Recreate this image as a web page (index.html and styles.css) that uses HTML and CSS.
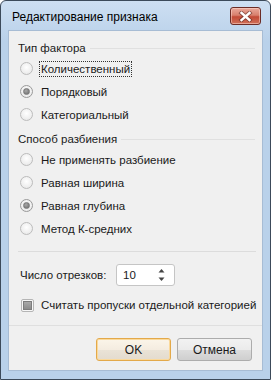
FILE: index.html
```html
<!DOCTYPE html>
<html lang="ru">
<head>
    <meta charset="UTF-8">
    <title>Редактирование признака</title>
    <link rel="stylesheet" href="styles.css">
</head>
<body>
    <div class="window">
        <div class="titlebar">
            <span class="title">Редактирование признака</span>
            <button class="close" type="button">
                <svg width="15" height="11" viewBox="0 0 15 11">
                    <path d="M3.5 2 L11.5 9 M11.5 2 L3.5 9" stroke="#5a2a24" stroke-width="4.2" stroke-linecap="square" opacity="0.6"/>
                    <path d="M3.5 2 L11.5 9 M11.5 2 L3.5 9" stroke="#ffffff" stroke-width="2.4" stroke-linecap="square"/>
                </svg>
            </button>
        </div>

        <div class="client">
            <div class="group-head"><span>Тип фактора</span></div>
            <label class="radio"><span class="dot"></span><span class="text focus">Количественный</span></label>
            <label class="radio"><span class="dot on"></span><span class="text">Порядковый</span></label>
            <label class="radio"><span class="dot"></span><span class="text">Категориальный</span></label>

            <div class="group-head second"><span>Способ разбиения</span></div>
            <label class="radio"><span class="dot"></span><span class="text">Не применять разбиение</span></label>
            <label class="radio"><span class="dot"></span><span class="text">Равная ширина</span></label>
            <label class="radio"><span class="dot on"></span><span class="text">Равная глубина</span></label>
            <label class="radio"><span class="dot"></span><span class="text">Метод К-средних</span></label>

            <div class="sep"></div>

            <div class="spin-row">
                <span class="spin-label">Число отрезков:</span>
                <div class="spin">
                    <span>10</span>
                    <svg width="7" height="14" viewBox="0 0 7 14">
                        <path d="M3.5 1 L6.5 4.5 L0.5 4.5 Z" fill="#444"/>
                        <path d="M3.5 13 L6.5 9.5 L0.5 9.5 Z" fill="#444"/>
                    </svg>
                </div>
            </div>

            <label class="check"><span class="box"><span class="fill"></span></span><span class="text">Считать пропуски отдельной категорией</span></label>

            <div class="buttons">
                <button class="btn default" type="button">OK</button>
                <button class="btn" type="button">Отмена</button>
            </div>
        </div>
    </div>
</body>
</html>
```

FILE: styles.css
```css
body {
    margin: 0;
    padding: 0;
    background: #ffffff;
    font-family: "Liberation Sans", Arial, sans-serif;
    font-size: 11.5px;
    color: #1a1a1a;
}
.window {
    width: 271px;
    height: 380px;
    box-sizing: border-box;
    border: 1px solid #3c4a5a;
    border-radius: 6px 6px 0 0;
    background: linear-gradient(to bottom, #cddff2, #b9d1ea 40px);
    display: flex;
    flex-direction: column;
}
.titlebar {
    height: 29px;
    display: flex;
    align-items: center;
    justify-content: space-between;
    padding: 0 9px 0 11px;
}
.title {
    color: #000;
    font-size: 12px;
    margin-top: 2px;
}
.close {
    width: 31px;
    height: 18px;
    padding: 0;
    margin-top: 1px;
    border: 1px solid #6b2c26;
    border-radius: 3px;
    background: linear-gradient(to bottom, #e9a99b, #d8806d 45%, #c24a36 55%, #d0715a);
    box-shadow: inset 0 0 0 1px rgba(255, 220, 210, 0.5);
    display: flex;
    align-items: center;
    justify-content: center;
}
.client {
    flex: 1;
    margin: 0 7px 8px 7px;
    background: #f0f0f0;
    border: 1px solid #a7bcd4;
    padding: 8px 0 9px 0;
    display: flex;
    flex-direction: column;
    white-space: nowrap;
}
.group-head {
    height: 18px;
    display: flex;
    align-items: center;
    padding: 0 7px 0 9px;
    gap: 4px;
}
.group-head::after {
    content: "";
    flex: 1;
    height: 1px;
    background: #e0e0e0;
}
.group-head.second {
    margin-top: 4px;
}
.radio {
    height: 23px;
    display: flex;
    align-items: center;
    padding-left: 11px;
    gap: 6px;
}
.dot {
    width: 11px;
    height: 11px;
    border-radius: 50%;
    border: 1px solid #bcbcbc;
    background: radial-gradient(circle at 50% 40%, #ffffff, #ececec 70%, #dcdcdc);
    display: flex;
    align-items: center;
    justify-content: center;
}
.dot.on {
    border-color: #9a9a9a;
}
.dot.on::after {
    content: "";
    width: 5px;
    height: 5px;
    border-radius: 50%;
    background: radial-gradient(circle at 40% 35%, #a8a8a8, #6a6a6a);
    border: 1px solid #7a7a7a;
}
.text {
    padding: 0 1px;
    line-height: 14px;
    border: 1px solid transparent;
}
.text.focus {
    border: 1px dotted #333;
}
.sep {
    height: 1px;
    margin: 11px 6px 0 9px;
    background: #dcdcdc;
}
.spin-row {
    margin-top: 12px;
    height: 22px;
    display: flex;
    align-items: center;
    padding-left: 11px;
}
.spin-label {
    width: 96px;
    flex-shrink: 0;
}
.spin {
    height: 20px;
    width: 42px;
    border: 1px solid #c5c5c5;
    border-radius: 3px;
    background: #ffffff;
    display: flex;
    align-items: center;
    justify-content: space-between;
    padding: 0 9px 0 6px;
}
.check {
    margin-top: 10px;
    height: 18px;
    display: flex;
    align-items: center;
    padding-left: 12px;
    gap: 5px;
}
.box {
    width: 11px;
    height: 11px;
    border: 1px solid #b5b5b5;
    border-radius: 2px;
    background: #f7f7f7;
    display: flex;
    align-items: center;
    justify-content: center;
}
.fill {
    width: 7px;
    height: 7px;
    border: 1px solid #7d7d7d;
    background: linear-gradient(to bottom, #a9a9a9, #8c8c8c);
}
.buttons {
    margin-top: 11px;
    border-top: 1px solid #dfdfdf;
    padding: 12px 10px 0 0;
    display: flex;
    justify-content: flex-end;
    gap: 6px;
}
.btn {
    width: 75px;
    height: 23px;
    font-family: inherit;
    font-size: 12px;
    color: #1a1a1a;
    border: 1px solid #acacac;
    border-radius: 3px;
    background: linear-gradient(to bottom, #f2f2f2, #ebebeb 50%, #dddddd 51%, #cfcfcf);
    padding: 0;
}
.btn.default {
    border-color: #e3a94a;
    background: linear-gradient(to bottom, #fbf5e9, #f4ece0 50%, #eae3d6 51%, #e3dbce);
    box-shadow: inset 0 0 0 1px #fbd99a;
}
```
